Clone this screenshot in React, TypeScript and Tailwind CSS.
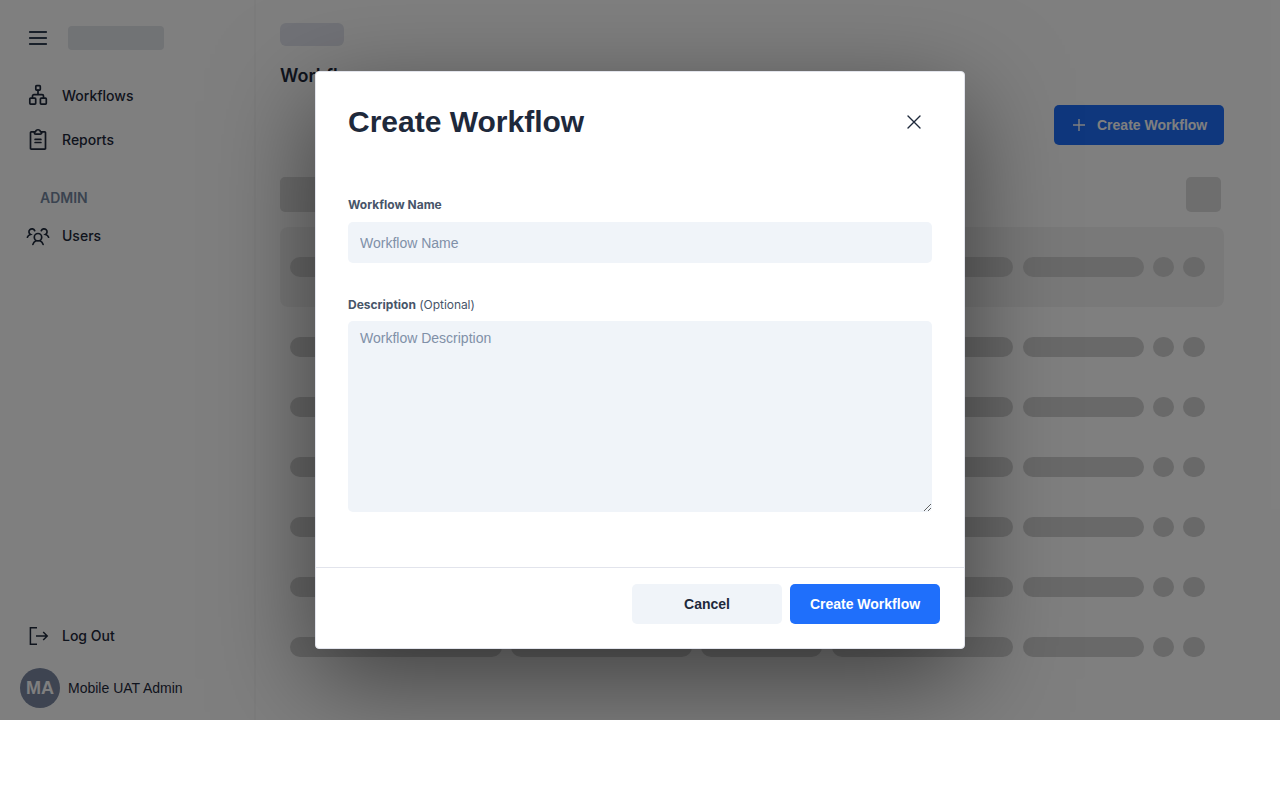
import React from "react";

function WorkflowIcon() {
  return (
    <svg className="size-6" viewBox="0 0 24 24" fill="none" stroke="#1e293b" strokeWidth="1.7" strokeLinejoin="round" strokeLinecap="round">
      <rect x="9.8" y="1.6" width="4.5" height="4.5" rx="0.8" />
      <rect x="3.8" y="14.2" width="5.9" height="5.9" rx="0.8" />
      <rect x="14.4" y="14.2" width="5.9" height="5.9" rx="0.8" />
      <path d="M12 6.2v4.4M6.5 14v-2a1.4 1.4 0 0 1 1.4-1.4h8.2a1.4 1.4 0 0 1 1.4 1.4v2" />
    </svg>
  );
}

function ReportIcon() {
  return (
    <svg className="size-6" viewBox="0 0 24 24" fill="none" stroke="#1e293b" strokeWidth="1.7" strokeLinejoin="round" strokeLinecap="round">
      <path d="M8 3.8H5.3a.8.8 0 0 0-.8.8v15.8a.8.8 0 0 0 .8.8h13.4a.8.8 0 0 0 .8-.8V4.600a.8.8 0 0 0-.8-.8H16" />
      <path d="M8.300 3.800h1.200a2.550 2.550 0 0 1 5 0h1.200v.9a1.500 1.500 0 0 1-1.500 1.500H9.800a1.500 1.500 0 0 1-1.500-1.500z" />
      <path d="M9.100 11.400h5.800M9.100 14.500h5.800" />
    </svg>
  );
}

function UsersIcon() {
  return (
    <svg className="size-6" viewBox="0 0 24 24" fill="none" stroke="#1e293b" strokeWidth="1.7" strokeLinecap="round">
      <circle cx="12" cy="13.2" r="3.7" />
      <path d="M6.900 20.400a5.500 5.500 0 0 1 3.100-3.700M17.100 20.400a5.500 5.500 0 0 0-3.100-3.700" />
      <path d="M1.400 13.200c.5-1.500 1.500-2.300 3.100-2.700A3 3 0 1 1 8.700 6.700M22.600 13.200c-.5-1.500-1.500-2.300-3.100-2.700a3 3 0 1 0-4.200-3.800" />
    </svg>
  );
}

function LogoutIcon() {
  return (
    <svg className="size-6" viewBox="0 0 24 24" fill="none" stroke="#1e293b" strokeWidth="1.5">
      <path d="M11 3.700H4.400v16.600H11M10 12h11.300M17.200 8 21.200 12l-4 4" />
    </svg>
  );
}

function NavItem({ icon, label }: { icon: React.ReactNode; label: string }) {
  return (
    <div className="flex h-11 items-center gap-3 pl-[26px] text-sm font-medium text-[#1e293b]">
      {icon}
      <span>{label}</span>
    </div>
  );
}

function SkeletonRow() {
  return (
    <div className="flex h-5 gap-[9.3px] px-2.5 *:rounded-full *:bg-[#d2d2d2]">
      <div className="w-[211.6px]" />
      <div className="w-[181.3px]" />
      <div className="w-[121px]" />
      <div className="w-[181.5px]" />
      <div className="w-[121px]" />
      <div className="w-[21.3px]" />
      <div className="w-[21.3px]" />
    </div>
  );
}

export default function App() {
  return (
    <div className="relative h-[720px] overflow-hidden bg-white font-[Inter,sans-serif]">
      <div className="flex h-full">
        <aside className="flex w-64 shrink-0 flex-col border-r-2 border-[#f8f8f8]">
          <div className="flex h-[76px] items-center gap-5 pl-7">
            <svg className="h-4 w-5" viewBox="0 0 20 16" stroke="#334155" strokeWidth="1.8" strokeLinecap="round">
              <path d="M1.8 2h16.4M1.8 8h16.4M1.8 14h16.4" />
            </svg>
            <div className="h-6 w-24 rounded bg-[#e3e6ea]" />
          </div>
          <div className="-mt-0.5">
            <NavItem icon={<WorkflowIcon />} label="Workflows" />
            <NavItem icon={<ReportIcon />} label="Reports" />
          </div>
          <div className="mt-[26px] h-5 pl-10 text-sm font-semibold leading-5 text-[#7587a0]">ADMIN</div>
          <div className="mt-1.5">
            <NavItem icon={<UsersIcon />} label="Users" />
          </div>
          <div className="mt-auto">
            <NavItem icon={<LogoutIcon />} label="Log Out" />
          </div>
          <div className="mt-2.5 mb-3 flex items-center gap-2 pl-5 font-['Liberation_Sans',sans-serif]">
            <div className="flex size-10 items-center justify-center rounded-full bg-[#7c89a3] text-lg font-bold text-white">MA</div>
            <span className="text-sm text-[#1e293b]">Mobile UAT Admin</span>
          </div>
        </aside>
        <main className="flex flex-1 flex-col pl-6 pr-14 pt-[23px]">
          <div className="h-[23px] w-16 rounded-md bg-[#e2e5ee]" />
          <h2 className="mt-4 text-lg font-semibold leading-7 text-[#1e293b]">Workflows</h2>
          <div className="mt-[15px] flex h-10 w-[170px] items-center gap-[11px] self-end rounded-[5px] bg-[#1f6ffb] pl-[18px] font-['Liberation_Sans',sans-serif] text-sm font-bold text-white">
            <svg className="size-3.5" viewBox="0 0 14 14" stroke="white" strokeWidth="1.4">
              <path d="M7 1v12M1 7h12" />
            </svg>
            Create Workflow
          </div>
          <div className="mt-8 flex h-[35px] justify-between pr-[3px]">
            <div className="w-[300px] rounded-[5px] bg-[#dcdcdc]" />
            <div className="w-[35px] rounded-[5px] bg-[#dcdcdc]" />
          </div>
          <div className="mt-[15px] rounded-lg bg-[#f3f3f3] py-[30px]">
            <SkeletonRow />
          </div>
          <div className="mt-[30px] flex flex-col gap-10">
            <SkeletonRow />
            <SkeletonRow />
            <SkeletonRow />
            <SkeletonRow />
            <SkeletonRow />
            <SkeletonRow />
          </div>
        </main>
      </div>

      <div className="absolute inset-0 flex items-center justify-center bg-black/50">
        <div className="flex h-[578px] w-[650px] flex-col rounded border border-[#e2e4ec] bg-white shadow-[0_30px_100px_rgba(0,0,0,0.5)]">
          <div className="flex h-[100px] items-center justify-between pl-8 pr-10">
            <h1 className="pb-px font-['Liberation_Sans',sans-serif] text-[30px] font-bold leading-10 text-[#1e293b]">Create Workflow</h1>
            <svg className="size-5" viewBox="0 0 20 20" stroke="#1e293b" strokeWidth="1.4" strokeLinecap="round">
              <path d="M4 4l12 12M16 4L4 16" />
            </svg>
          </div>
          <div className="flex flex-col px-8 pt-[25px] text-xs leading-4 text-[#475569]">
            <label className="font-bold">Workflow Name</label>
            <input placeholder="Workflow Name" className="mt-[9px] h-[41px] rounded-[5px] bg-[#f0f4f9] px-3 pt-px font-['Liberation_Sans',sans-serif] text-sm placeholder:text-[#8090a8]" />
            <label className="mt-[34px]">
              <b>Description</b> <span className="tracking-[-0.05px]">(Optional)</span>
            </label>
            <textarea placeholder="Workflow Description" className="mt-2 h-[191px] rounded-[5px] bg-[#f0f4f9] px-3 py-[7px] font-['Liberation_Sans',sans-serif] text-sm placeholder:text-[#8090a8]" />
          </div>
          <div className="mt-auto flex h-[81px] justify-end gap-2 border-t border-[#e2e4ec] pr-6 pt-4 font-['Liberation_Sans',sans-serif] text-sm font-bold">
            <button className="h-10 w-[150px] rounded-[5px] bg-[#f0f4f9] text-[#1e293b]">Cancel</button>
            <button className="h-10 w-[150px] rounded-[5px] bg-[#1f6ffb] text-white">Create Workflow</button>
          </div>
        </div>
      </div>
    </div>
  );
}
